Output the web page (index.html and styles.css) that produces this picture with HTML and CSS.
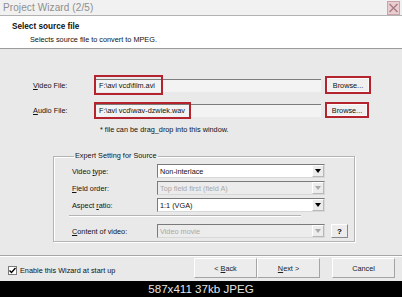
FILE: index.html
```html
<!DOCTYPE html>
<html lang="en">
<head>
    <meta charset="UTF-8">
    <meta name="viewport" content="width=device-width, initial-scale=1.0">
    <title>Project Wizard (2/5)</title>
    <link rel="stylesheet" href="styles.css">
</head>
<body>
    <div class="window">
        <div class="titlebar">
            <span class="title">Project Wizard (2/5)</span>
            <svg class="close" width="13" height="14" viewBox="0 0 13 14">
                <rect x="0.5" y="0.5" width="12" height="13" fill="#e9cdd1" stroke="#c9a4aa"/>
                <path d="M2.5 3 L10.5 11 M10.5 3 L2.5 11" stroke="#a77a82" stroke-width="1.4"/>
            </svg>
        </div>

        <div class="header">
            <div class="header-title">Select source file</div>
            <div class="header-sub">Selects source file to convert to MPEG.</div>
        </div>

        <div class="main">
            <div class="file-row">
                <label class="file-label"><u>V</u>ideo File:</label>
                <div class="field">
                    <span class="path">F:\avi vcd\film.avi</span>
                </div>
                <button class="browse">Browse...</button>
            </div>
            <div class="file-row">
                <label class="file-label"><u>A</u>udio File:</label>
                <div class="field">
                    <span class="path path-short">F:\avi vcd\wav-dzwiek.wav</span>
                </div>
                <button class="browse browse-short">Browse...</button>
            </div>
            <div class="note">* file can be drag_drop into this window.</div>

            <fieldset class="group">
                <legend>Expert Setting for Source</legend>
                <div class="opt-row">
                    <span class="opt-label">Video <u>t</u>ype:</span>
                    <div class="combo">
                        <span class="combo-text">Non-interlace</span>
                        <span class="arrow"><svg width="6" height="4" viewBox="0 0 6 4"><path d="M0 0 H6 L3 4 Z" fill="#000"/></svg></span>
                    </div>
                </div>
                <div class="opt-row">
                    <span class="opt-label"><u>F</u>ield order:</span>
                    <div class="combo disabled">
                        <span class="combo-text">Top field first (field A)</span>
                        <span class="arrow"><svg width="6" height="4" viewBox="0 0 6 4"><path d="M0 0 H6 L3 4 Z" fill="#a8a8a8"/></svg></span>
                    </div>
                </div>
                <div class="opt-row">
                    <span class="opt-label">Aspect <u>r</u>atio:</span>
                    <div class="combo">
                        <span class="combo-text">1:1 (VGA)</span>
                        <span class="arrow"><svg width="6" height="4" viewBox="0 0 6 4"><path d="M0 0 H6 L3 4 Z" fill="#000"/></svg></span>
                    </div>
                </div>
                <div class="sep"></div>
                <div class="opt-row">
                    <span class="opt-label"><u>C</u>ontent of video:</span>
                    <div class="combo disabled">
                        <span class="combo-text">Video movie</span>
                        <span class="arrow"><svg width="6" height="4" viewBox="0 0 6 4"><path d="M0 0 H6 L3 4 Z" fill="#a8a8a8"/></svg></span>
                    </div>
                    <button class="help">?</button>
                </div>
            </fieldset>
        </div>

        <div class="bottom">
            <label class="check">
                <span class="box"><svg width="7" height="7" viewBox="0 0 7 7"><path d="M0.5 3.5 L2.5 5.5 L6.5 1" stroke="#000" stroke-width="1.4" fill="none"/></svg></span>
                Enable this Wizard at start up
            </label>
            <div class="buttons">
                <button class="btn">&lt; <u>B</u>ack</button>
                <button class="btn"><u>N</u>ext &gt;</button>
                <button class="btn btn-cancel">Cancel</button>
            </div>
        </div>
    </div>
    <div class="caption">587x411 37kb JPEG</div>
</body>
</html>
```

FILE: styles.css
```css
body {
    margin: 0;
    width: 402px;
    height: 297px;
    overflow: hidden;
    font-family: 'Liberation Sans', Arial, sans-serif;
    font-size: 7.3px;
    color: #111;
    background-color: #000;
}

.window {
    height: 281px;
    display: flex;
    flex-direction: column;
    background-color: #e9e9e9;
}

.titlebar {
    height: 15px;
    flex-shrink: 0;
    display: flex;
    justify-content: space-between;
    align-items: center;
    padding: 0 2px 0 3px;
    background-color: #f1f1f1;
    border-bottom: 1px solid #b2b2b2;
}

.title {
    font-size: 10px;
    color: #8e8e8e;
    letter-spacing: 0.1px;
}

.close {
    display: block;
}

.header {
    height: 32px;
    flex-shrink: 0;
    background-color: #fff;
    border-bottom: 1px solid #9c9c9c;
    padding-left: 12px;
}

.header-title {
    font-weight: bold;
    font-size: 8.2px;
    margin-top: 6px;
    line-height: 10px;
}

.header-sub {
    margin-top: 3px;
    padding-left: 18px;
    line-height: 10px;
}

.main {
    flex: 1;
    padding-top: 26px;
    border-bottom: 1px solid #a6a6a6;
}

.file-row {
    display: flex;
    align-items: center;
    height: 20px;
    padding-left: 33px;
    margin-bottom: 5px;
}

.file-label {
    width: 62px;
}

u {
    text-decoration: underline;
    text-underline-offset: 1px;
}

.field {
    width: 226px;
    height: 20px;
    display: flex;
    align-items: center;
    background: linear-gradient(to bottom,
        transparent 4px, #7c7c7c 4px, #7c7c7c 5px,
        #f3f3f3 5px, #f3f3f3 17px, transparent 17px);
}

.path {
    box-sizing: border-box;
    height: 20px;
    display: flex;
    align-items: center;
    padding: 0 6px 0 3px;
    border: 2px solid #b3242e;
    margin-left: -1px;
}

.path-short {
    height: 17px;
    padding-right: 4px;
}

.browse {
    box-sizing: border-box;
    width: 46px;
    height: 18px;
    margin-left: 4px;
    padding: 0;
    font-family: inherit;
    font-size: 7.3px;
    color: #111;
    background-color: #f0f0f0;
    border: 2px solid #b3242e;
    box-shadow: inset 0 0 0 1px #fafafa;
}

.browse-short {
    width: 44px;
    height: 16px;
}

.note {
    padding-left: 100px;
    line-height: 10px;
    margin-top: 2px;
}

.group {
    width: 302px;
    margin: 16px 0 0 53px;
    padding: 3px 0 3px 18px;
    border: 1px solid #b4b4b4;
    box-shadow: 1px 1px 0 #fff, inset 1px 1px 0 #fff;
    box-sizing: border-box;
}

.group legend {
    padding: 0 1px;
    margin-left: 2px;
    line-height: 10px;
}

.opt-row {
    display: flex;
    align-items: center;
    height: 14px;
    margin-bottom: 3px;
}

.opt-row:last-child {
    margin-bottom: 0;
}

.opt-label {
    width: 85px;
}

.combo {
    box-sizing: border-box;
    width: 168px;
    height: 14px;
    display: flex;
    align-items: center;
    justify-content: space-between;
    background-color: #fff;
    border: 1px solid #7a7a7a;
    border-right-color: #d8d8d8;
    border-bottom-color: #d8d8d8;
}

.combo-text {
    padding-left: 2px;
}

.combo.disabled {
    background-color: #ececec;
    color: #a8a8a8;
}

.arrow {
    box-sizing: border-box;
    width: 12px;
    height: 12px;
    display: flex;
    align-items: center;
    justify-content: center;
    background-color: #ececec;
    border: 1px solid #b8b8b8;
    border-top-color: #fff;
    border-left-color: #fff;
}

.sep {
    width: 232px;
    margin: 3px 0 7px -3px;
    border-top: 1px solid #b4b4b4;
    border-bottom: 1px solid #fff;
}

.help {
    box-sizing: border-box;
    width: 17px;
    height: 14px;
    margin-left: 6px;
    padding: 0;
    font-family: inherit;
    font-weight: bold;
    font-size: 8px;
    background-color: #ececec;
    border: 1px solid #8a8a8a;
    border-top-color: #fff;
    border-left-color: #fff;
}

.bottom {
    flex-shrink: 0;
    height: 25px;
    display: flex;
    align-items: center;
    justify-content: space-between;
    padding: 0 7px 0 8px;
    border-top: 1px solid #fff;
    box-sizing: border-box;
}

.check {
    display: flex;
    align-items: center;
    gap: 3px;
    margin-top: 3px;
}

.box {
    box-sizing: border-box;
    width: 9px;
    height: 9px;
    display: flex;
    align-items: center;
    justify-content: center;
    background-color: #fff;
    border: 1px solid #7a7a7a;
}

.buttons {
    display: flex;
    margin-top: -2px;
}

.btn {
    box-sizing: border-box;
    width: 63px;
    height: 20px;
    padding: 0;
    font-family: inherit;
    font-size: 7.3px;
    color: #222;
    background-color: #ececec;
    border: 1px solid #a4a4a4;
    border-top-color: #fff;
    border-left-color: #fff;
}

.btn-cancel {
    margin-left: 12px;
}

.caption {
    height: 16px;
    line-height: 16px;
    text-align: center;
    color: #e6e6e6;
    font-size: 11.6px;
}
```
